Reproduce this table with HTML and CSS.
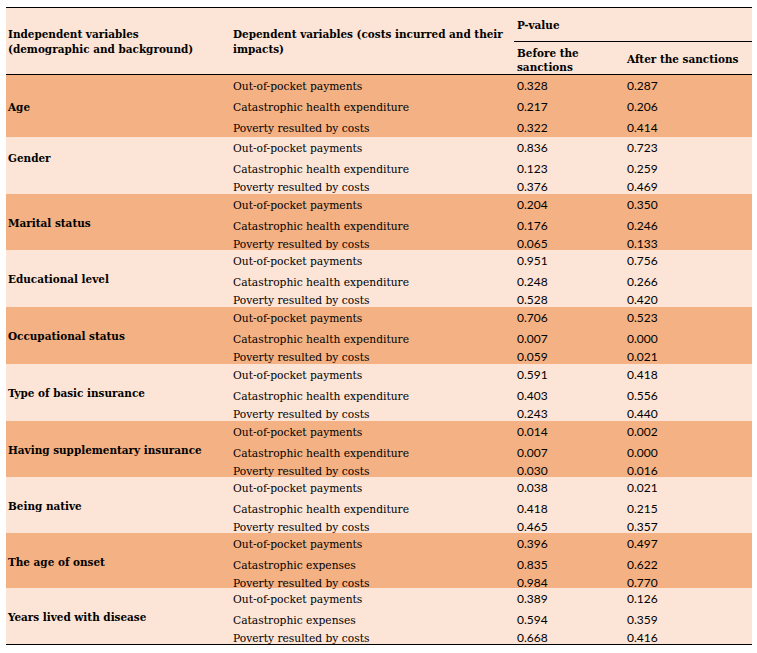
FILE: index.html
```html
<!DOCTYPE html>
<html>
<head>
<meta charset="utf-8">
<link rel="stylesheet" href="styles.css">
</head>
<body>
<div class="page">
  <div class="table">
    <div class="head">
      <div class="h-ind">Independent variables<br>(demographic and background)</div>
      <div class="h-dep">Dependent variables (costs incurred and their<br>impacts)</div>
      <div class="h-p">P-value</div>
      <div class="h-before">Before the<br>sanctions</div>
      <div class="h-after">After the sanctions</div>
    </div>

    <div class="group dark first">
      <div class="label">Age</div>
      <div class="col txt"><span>Out-of-pocket payments</span><span>Catastrophic health expenditure</span><span>Poverty resulted by costs</span></div>
      <div class="col num"><span>0.328</span><span>0.217</span><span>0.322</span></div>
      <div class="col num"><span>0.287</span><span>0.206</span><span>0.414</span></div>
    </div>

    <div class="group light h57">
      <div class="label high">Gender</div>
      <div class="col txt"><span>Out-of-pocket payments</span><span>Catastrophic health expenditure</span><span>Poverty resulted by costs</span></div>
      <div class="col num"><span>0.836</span><span>0.123</span><span>0.376</span></div>
      <div class="col num"><span>0.723</span><span>0.259</span><span>0.469</span></div>
    </div>

    <div class="group dark h56">
      <div class="label">Marital status</div>
      <div class="col txt"><span>Out-of-pocket payments</span><span>Catastrophic health expenditure</span><span>Poverty resulted by costs</span></div>
      <div class="col num"><span>0.204</span><span>0.176</span><span>0.065</span></div>
      <div class="col num"><span>0.350</span><span>0.246</span><span>0.133</span></div>
    </div>

    <div class="group light h57">
      <div class="label">Educational level</div>
      <div class="col txt"><span>Out-of-pocket payments</span><span>Catastrophic health expenditure</span><span>Poverty resulted by costs</span></div>
      <div class="col num"><span>0.951</span><span>0.248</span><span>0.528</span></div>
      <div class="col num"><span>0.756</span><span>0.266</span><span>0.420</span></div>
    </div>

    <div class="group dark h57">
      <div class="label">Occupational status</div>
      <div class="col txt"><span>Out-of-pocket payments</span><span>Catastrophic health expenditure</span><span>Poverty resulted by costs</span></div>
      <div class="col num"><span>0.706</span><span>0.007</span><span>0.059</span></div>
      <div class="col num"><span>0.523</span><span>0.000</span><span>0.021</span></div>
    </div>

    <div class="group light h57">
      <div class="label">Type of basic insurance</div>
      <div class="col txt"><span>Out-of-pocket payments</span><span>Catastrophic health expenditure</span><span>Poverty resulted by costs</span></div>
      <div class="col num"><span>0.591</span><span>0.403</span><span>0.243</span></div>
      <div class="col num"><span>0.418</span><span>0.556</span><span>0.440</span></div>
    </div>

    <div class="group dark h56">
      <div class="label">Having supplementary insurance</div>
      <div class="col txt"><span>Out-of-pocket payments</span><span>Catastrophic health expenditure</span><span>Poverty resulted by costs</span></div>
      <div class="col num"><span>0.014</span><span>0.007</span><span>0.030</span></div>
      <div class="col num"><span>0.002</span><span>0.000</span><span>0.016</span></div>
    </div>

    <div class="group light h56">
      <div class="label">Being native</div>
      <div class="col txt"><span>Out-of-pocket payments</span><span>Catastrophic health expenditure</span><span>Poverty resulted by costs</span></div>
      <div class="col num"><span>0.038</span><span>0.418</span><span>0.465</span></div>
      <div class="col num"><span>0.021</span><span>0.215</span><span>0.357</span></div>
    </div>

    <div class="group dark h55">
      <div class="label">The age of onset</div>
      <div class="col txt"><span>Out-of-pocket payments</span><span>Catastrophic expenses</span><span>Poverty resulted by costs</span></div>
      <div class="col num"><span>0.396</span><span>0.835</span><span>0.984</span></div>
      <div class="col num"><span>0.497</span><span>0.622</span><span>0.770</span></div>
    </div>

    <div class="group light h56">
      <div class="label">Years lived with disease</div>
      <div class="col txt"><span>Out-of-pocket payments</span><span>Catastrophic expenses</span><span>Poverty resulted by costs</span></div>
      <div class="col num"><span>0.389</span><span>0.594</span><span>0.668</span></div>
      <div class="col num"><span>0.126</span><span>0.359</span><span>0.416</span></div>
    </div>
  </div>
</div>
</body>
</html>
```
FILE: styles.css
```css
html, body {
  margin: 0;
  padding: 0;
  background: #ffffff;
}

.page {
  padding: 7px 0 0 6px;
  font-family: "DejaVu Serif", serif;
  font-stretch: condensed;
  font-size: 12px;
  color: #000000;
}

.table {
  width: 746px;
  border-top: 1px solid #000;
  border-bottom: 1px solid #000;
}

.head {
  display: grid;
  grid-template-columns: 225px 283px 110px 128px;
  grid-template-rows: 34px 32px;
  background: #fce4d6;
  border-bottom: 1px solid #000;
  font-weight: bold;
  font-size: 11.6px;
  line-height: 15px;
}

.h-ind {
  grid-column: 1;
  grid-row: 1 / 3;
  align-self: center;
  padding: 2px 0 0 2px;
}

.h-dep {
  grid-column: 2;
  grid-row: 1 / 3;
  align-self: center;
  padding: 2px 0 0 2px;
}

.h-p {
  grid-column: 3 / 5;
  grid-row: 1;
  border-bottom: 1px solid #000;
  display: flex;
  align-items: center;
  padding: 1px 0 0 3px;
}

.h-before {
  grid-column: 3;
  grid-row: 2;
  align-self: center;
  padding: 4px 0 0 3px;
  line-height: 14px;
}

.h-after {
  grid-column: 4;
  grid-row: 2;
  align-self: center;
  padding: 2px 0 0 3px;
}

.group {
  display: grid;
  grid-template-columns: 225px 283px 110px 128px;
  height: 57px;
}

.group.first { height: 62px; }
.group.h57 { height: 57px; }
.group.h56 { height: 56px; }
.group.h55 { height: 55px; }

.dark { background: #f4b183; }
.light { background: #fce4d6; }

.label {
  align-self: center;
  padding: 1px 0 0 2px;
  font-weight: bold;
  font-size: 11.6px;
  line-height: 15px;
}

.label.high {
  align-self: start;
  padding-top: 14px;
}

.col {
  display: flex;
  flex-direction: column;
}

.col span {
  display: block;
  height: 21px;
  line-height: 21px;
  white-space: nowrap;
}

.col span:last-child {
  height: 15px;
  line-height: 15px;
}

.first .col span:last-child {
  height: 21px;
  line-height: 21px;
}

.txt {
  padding: 1px 0 0 2px;
  font-size: 11.9px;
}

.num {
  padding-left: 3px;
  font-family: "Lato", "Liberation Sans", sans-serif;
  font-stretch: normal;
  font-size: 12px;
}
```
